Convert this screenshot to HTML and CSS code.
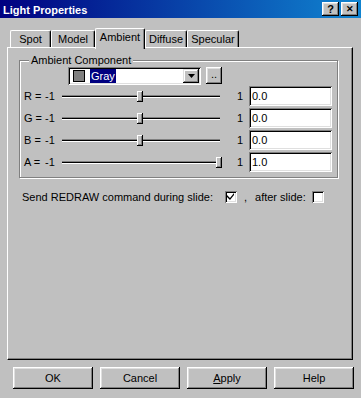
FILE: index.html
```html
<!DOCTYPE html>
<html lang="en">
<head>
  <meta charset="UTF-8" />
  <title>Light Properties</title>
  <link rel="stylesheet" href="styles.css">
</head>
<body>
  <div class="window">
    <div class="titlebar">
      <span class="title">Light Properties</span>
      <div class="title-buttons">
        <button class="tb-btn">?</button>
        <button class="tb-btn close">&#x2715;</button>
      </div>
    </div>

    <!-- Tabs -->
    <div class="tabs">
      <div class="tab tab-spot">Spot</div>
      <div class="tab tab-model">Model</div>
      <div class="tab tab-ambient active">Ambient</div>
      <div class="tab tab-diffuse">Diffuse</div>
      <div class="tab tab-specular">Specular</div>
    </div>

    <div class="panel">
      <fieldset class="group">
        <legend>Ambient Component</legend>

        <div class="color-row">
          <div class="combo">
            <span class="swatch"></span>
            <span class="combo-text">Gray</span>
            <span class="combo-arrow">
              <svg width="7" height="4" viewBox="0 0 7 4"><path d="M0 0H7L3.5 4Z" fill="#000"/></svg>
            </span>
          </div>
          <button class="dots">..</button>
        </div>

        <div class="slider-row">
          <span class="axis">R =</span><span class="min">-1</span>
          <div class="track"><div class="channel"></div><div class="thumb" style="left: 50%"></div></div>
          <span class="max">1</span>
          <div class="edit">0.0</div>
        </div>
        <div class="slider-row">
          <span class="axis">G =</span><span class="min">-1</span>
          <div class="track"><div class="channel"></div><div class="thumb" style="left: 50%"></div></div>
          <span class="max">1</span>
          <div class="edit">0.0</div>
        </div>
        <div class="slider-row">
          <span class="axis">B =</span><span class="min">-1</span>
          <div class="track"><div class="channel"></div><div class="thumb" style="left: 50%"></div></div>
          <span class="max">1</span>
          <div class="edit">0.0</div>
        </div>
        <div class="slider-row">
          <span class="axis">A =</span><span class="min">-1</span>
          <div class="track"><div class="channel"></div><div class="thumb" style="left: 100%"></div></div>
          <span class="max">1</span>
          <div class="edit">1.0</div>
        </div>
      </fieldset>

      <div class="redraw-row">
        <span class="redraw-text">Send REDRAW command during slide:</span>
        <span class="check checked">
          <svg width="7" height="7" viewBox="0 0 7 7"><path d="M0 2L3 5L7 0V2L3 7L0 4Z" fill="#000"/></svg>
        </span>
        <span class="comma">,</span>
        <span class="after-text">after slide:</span>
        <span class="check"></span>
      </div>
    </div>

    <div class="buttons">
      <button class="btn">OK</button>
      <button class="btn">Cancel</button>
      <button class="btn"><u>A</u>pply</button>
      <button class="btn">Help</button>
    </div>
  </div>
</body>
</html>
```

FILE: styles.css
```css
body {
  margin: 0;
  background-color: #c0c0c0;
  font-family: "Liberation Sans", Arial, sans-serif;
  font-size: 11px;
  color: #000;
}
.window {
  width: 361px;
  height: 398px;
  overflow: hidden;
}
.titlebar {
  height: 18px;
  display: flex;
  align-items: center;
  padding: 0 3px 0 3px;
  background: linear-gradient(to right, #000080, #1084d0);
  color: #fff;
}
.title {
  font-weight: bold;
  font-size: 11px;
  margin-top: 1px;
}
.title-buttons {
  margin-left: auto;
  display: flex;
  gap: 2px;
}
.tb-btn {
  width: 17px;
  height: 14px;
  padding: 0;
  border: none;
  background-color: #c0c0c0;
  font-family: "Liberation Sans", Arial, sans-serif;
  font-weight: bold;
  font-size: 11px;
  line-height: 14px;
  color: #000;
  box-shadow: inset -1px -1px 0 #000, inset 1px 1px 0 #fff, inset -2px -2px 0 #808080, inset 2px 2px 0 #dfdfdf;
}
.tb-btn.close {
  font-size: 9px;
}

/* tabs */
.tabs {
  display: flex;
  align-items: flex-end;
  margin-top: 11px;
  padding-left: 10px;
  height: 18px;
}
.tab {
  height: 17px;
  box-sizing: border-box;
  border-top: 1px solid #fff;
  border-left: 1px solid #fff;
  border-right: 1px solid #000;
  border-radius: 2px 2px 0 0;
  box-shadow: inset -1px 0 0 #808080;
  text-align: center;
  line-height: 16px;
}
.tab-spot { width: 41px; }
.tab-model { width: 44px; }
.tab-ambient { width: 50px; }
.tab-diffuse { width: 42px; }
.tab-specular { width: 52px; }
.tab.active {
  height: 21px;
  margin-bottom: -2px;
  position: relative;
  z-index: 1;
  background-color: #c0c0c0;
  line-height: 17px;
}

.panel {
  margin-left: 7px;
  width: 346px;
  height: 313px;
  box-sizing: border-box;
  border-top: 1px solid #fff;
  border-left: 1px solid #fff;
  border-right: 1px solid #000;
  border-bottom: 1px solid #000;
  box-shadow: inset -1px -1px 0 #808080;
  padding-top: 6px;
}

.group {
  margin: 0 0 0 11px;
  width: 319px;
  box-sizing: border-box;
  padding: 0 3px 4px 4px;
  border: 1px solid #808080;
  box-shadow: 1px 1px 0 #fff, inset 1px 1px 0 #fff;
}
.group legend {
  margin-left: 5px;
  padding: 0 2px;
  line-height: 13px;
  background-color: #c0c0c0;
}
.color-row {
  display: flex;
  gap: 5px;
  margin-left: 44px;
  height: 18px;
}
.combo {
  width: 133px;
  height: 18px;
  box-sizing: border-box;
  display: flex;
  align-items: center;
  background-color: #fff;
  padding: 2px 2px 2px 5px;
  box-shadow: inset 1px 1px 0 #808080, inset -1px -1px 0 #fff, inset 2px 2px 0 #000, inset -2px -2px 0 #dfdfdf;
}
.swatch {
  width: 10px;
  height: 10px;
  background-color: #808080;
  border: 1px solid #000;
}
.combo-text {
  margin-left: 5px;
  background-color: #000080;
  color: #fff;
  padding: 0 1px;
  line-height: 14px;
}
.combo-arrow {
  margin-left: auto;
  width: 16px;
  height: 14px;
  display: flex;
  align-items: center;
  justify-content: center;
  background-color: #c0c0c0;
  box-shadow: inset -1px -1px 0 #000, inset 1px 1px 0 #dfdfdf, inset -2px -2px 0 #808080, inset 2px 2px 0 #fff;
}
.dots {
  width: 16px;
  height: 17px;
  padding: 0 0 4px;
  border: none;
  background-color: #c0c0c0;
  font-family: "Liberation Sans", Arial, sans-serif;
  font-size: 11px;
  color: #000;
  box-shadow: inset -1px -1px 0 #000, inset 1px 1px 0 #fff, inset -2px -2px 0 #808080, inset 2px 2px 0 #dfdfdf;
}

.slider-row {
  height: 22px;
  display: flex;
  align-items: center;
}
.slider-row:first-of-type {
  margin-top: 2px;
}
.axis {
  width: 21px;
}
.min {
  width: 17px;
}
.track {
  position: relative;
  width: 158px;
  height: 22px;
  display: flex;
  align-items: center;
}
.channel {
  width: 100%;
  height: 1px;
  background-color: #000;
  border-top: 1px solid #808080;
  border-bottom: 1px solid #fff;
}
.thumb {
  position: absolute;
  top: 6px;
  width: 6px;
  height: 11px;
  margin-left: -4px;
  background-color: #c0c0c0;
  box-shadow: inset -1px -1px 0 #000, inset 1px 1px 0 #fff, inset -2px -2px 0 #808080;
}
.max {
  margin-left: 17px;
  width: 12px;
}
.edit {
  width: 83px;
  height: 20px;
  box-sizing: border-box;
  padding: 2px 3px;
  line-height: 16px;
  background-color: #fff;
  box-shadow: inset 1px 1px 0 #808080, inset -1px -1px 0 #fff, inset 2px 2px 0 #000, inset -2px -2px 0 #dfdfdf;
}

.redraw-row {
  display: flex;
  align-items: center;
  margin-top: 12px;
  padding-left: 14px;
  height: 13px;
}
.check {
  width: 12px;
  height: 12px;
  box-sizing: border-box;
  display: flex;
  align-items: center;
  justify-content: center;
  background-color: #fff;
  box-shadow: inset 1px 1px 0 #808080, inset -1px -1px 0 #fff, inset 2px 2px 0 #000, inset -2px -2px 0 #dfdfdf;
}
.check.checked {
  margin-left: 12px;
}
.comma {
  margin-left: 7px;
}
.after-text {
  margin-left: 8px;
}
.check:last-child {
  margin-left: 6px;
}

.buttons {
  display: flex;
  gap: 7px;
  margin-top: 7px;
  padding-left: 13px;
}
.btn {
  width: 80px;
  height: 22px;
  padding: 0;
  border: none;
  background-color: #c0c0c0;
  font-family: "Liberation Sans", Arial, sans-serif;
  font-size: 11px;
  color: #000;
  box-shadow: inset -1px -1px 0 #000, inset 1px 1px 0 #fff, inset -2px -2px 0 #808080, inset 2px 2px 0 #dfdfdf;
}
```
